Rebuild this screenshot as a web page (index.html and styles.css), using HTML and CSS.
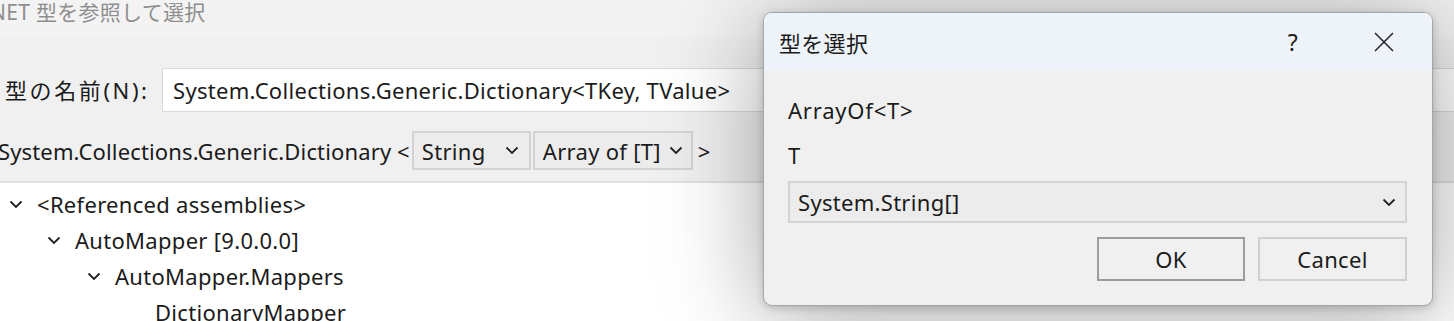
FILE: index.html
```html
<!DOCTYPE html>
<html lang="ja">
<head>
    <meta charset="UTF-8">
    <title>.NET 型を参照して選択</title>
    <link rel="stylesheet" href="styles.css">
</head>
<body>
    <div class="window">
        <div class="titlebar"><span class="title-text">.NET 型を参照して選択</span></div>
        <div class="form">
            <div class="name-row">
                <label class="name-label">型の名前(N):</label>
                <div class="textbox">System.Collections.Generic.Dictionary&lt;TKey, TValue&gt;</div>
            </div>
            <div class="generic-row">
                <span class="generic-name">System.Collections.Generic.Dictionary &lt;</span>
                <div class="combo combo-string">
                    <span>String</span>
                    <svg class="chev" width="14" height="9" viewBox="0 0 14 9"><path d="M1.5 1.5 L7 7 L12.5 1.5" /></svg>
                </div>
                <div class="combo combo-array">
                    <span>Array of [T]</span>
                    <svg class="chev" width="14" height="9" viewBox="0 0 14 9"><path d="M1.5 1.5 L7 7 L12.5 1.5" /></svg>
                </div>
                <span class="generic-close">&gt;</span>
            </div>
        </div>
        <div class="tree">
            <div class="node level0">
                <svg class="chev" width="14" height="9" viewBox="0 0 14 9"><path d="M1.5 1.5 L7 7 L12.5 1.5" /></svg>
                <span>&lt;Referenced assemblies&gt;</span>
            </div>
            <div class="node level1">
                <svg class="chev" width="14" height="9" viewBox="0 0 14 9"><path d="M1.5 1.5 L7 7 L12.5 1.5" /></svg>
                <span>AutoMapper [9.0.0.0]</span>
            </div>
            <div class="node level2">
                <svg class="chev" width="14" height="9" viewBox="0 0 14 9"><path d="M1.5 1.5 L7 7 L12.5 1.5" /></svg>
                <span>AutoMapper.Mappers</span>
            </div>
            <div class="node level3">
                <span>DictionaryMapper</span>
            </div>
        </div>
    </div>

    <div class="dialog">
        <div class="dialog-title">
            <span class="dialog-caption">型を選択</span>
            <span class="help">?</span>
            <svg class="close" width="20" height="20" viewBox="0 0 20 20"><path d="M1 1 L19 19 M19 1 L1 19" /></svg>
        </div>
        <div class="dialog-body">
            <div class="generic-label">ArrayOf&lt;T&gt;</div>
            <div class="param-label">T</div>
            <div class="combo combo-wide">
                <span>System.String[]</span>
                <svg class="chev" width="14" height="9" viewBox="0 0 14 9"><path d="M1.5 1.5 L7 7 L12.5 1.5" /></svg>
            </div>
            <div class="buttons">
                <div class="btn btn-default">OK</div>
                <div class="btn">Cancel</div>
            </div>
        </div>
    </div>
</body>
</html>
```

FILE: styles.css
```css
html, body {
    margin: 0;
    padding: 0;
}
body {
    width: 1454px;
    height: 321px;
    overflow: hidden;
    position: relative;
    background: #f0f0f0;
    color: #1b1b1b;
    font-family: "Noto Sans", "Noto Sans CJK JP", sans-serif;
    font-size: 22px;
    letter-spacing: 0.3px;
}

.chev path {
    fill: none;
    stroke: #222;
    stroke-width: 1.8;
}

/* parent window */
.titlebar {
    height: 38px;
    background: #f3f3f3;
    line-height: 24px;
    color: #8e8e8e;
    font-size: 21px;
}
.title-text {
    display: inline-block;
    margin-left: -16px;
}

.form {
    background: #f0f0f0;
    height: 145px;
    border-bottom: 2px solid #e1e1e1;
    padding-top: 30px;
    box-sizing: border-box;
}
.name-row {
    display: flex;
    align-items: center;
}
.name-label {
    width: 162px;
    padding-left: 5px;
    box-sizing: border-box;
    letter-spacing: 2.6px;
    margin-top: -2px;
}
.textbox {
    flex: 1;
    height: 44px;
    box-sizing: border-box;
    background: #fff;
    border: 1px solid #d9d9d9;
    border-right: none;
    padding-left: 10px;
    line-height: 42px;
}

.generic-row {
    display: flex;
    align-items: center;
    margin-top: 19px;
    margin-left: -2px;
}
.generic-name {
    margin-right: 2px;
    letter-spacing: 0.14px;
}
.combo {
    display: flex;
    align-items: center;
    justify-content: space-between;
    height: 39px;
    box-sizing: border-box;
    background: #ececec;
    border: 2px solid #d3d3d3;
    padding: 0 10px 0 8px;
}
.combo-string {
    width: 119px;
    margin-right: 2px;
}
.combo-array {
    width: 160px;
    padding-right: 8px;
}
.generic-close {
    margin-left: 5px;
}

.tree {
    background: #fff;
    height: 140px;
    padding-top: 3px;
}
.node {
    display: flex;
    align-items: center;
    height: 36px;
}
.node .chev {
    margin-right: 14px;
}
.level0 { padding-left: 9px; }
.level1 { padding-left: 47px; }
.level2 { padding-left: 87px; }
.level3 { padding-left: 155px; }

/* modal dialog */
.dialog {
    position: absolute;
    left: 763px;
    top: 12px;
    width: 670px;
    height: 294px;
    box-sizing: border-box;
    border: 1px solid #a6a6a6;
    border-radius: 9px;
    background: #f0f0f0;
    overflow: hidden;
    box-shadow: 0 10px 100px rgba(0, 0, 0, 0.36), 0 2px 8px rgba(0, 0, 0, 0.18);
}
.dialog-title {
    display: flex;
    align-items: center;
    height: 57px;
    background: #eef3fa;
    padding-left: 15px;
}
.dialog-caption {
    flex: 1;
}
.help {
    font-size: 23px;
    margin-right: 76px;
}
.close {
    margin-right: 38px;
}
.close path {
    stroke: #222;
    stroke-width: 1.5;
}
.dialog-body {
    padding: 0 25px 0 24px;
}
.generic-label {
    margin-top: 25px;
    line-height: 30px;
    letter-spacing: 0.8px;
}
.param-label {
    margin-top: 15px;
    line-height: 30px;
}
.combo-wide {
    margin-top: 11px;
    height: 42px;
    padding-right: 9px;
}
.buttons {
    display: flex;
    justify-content: flex-end;
    gap: 13px;
    margin-top: 14px;
}
.btn {
    width: 149px;
    height: 44px;
    box-sizing: border-box;
    border: 2px solid #d0d0d0;
    background: #f0f0f0;
    text-align: center;
    line-height: 40px;
}
.btn-default {
    width: 148px;
    border-color: #9c9c9c;
}
```
